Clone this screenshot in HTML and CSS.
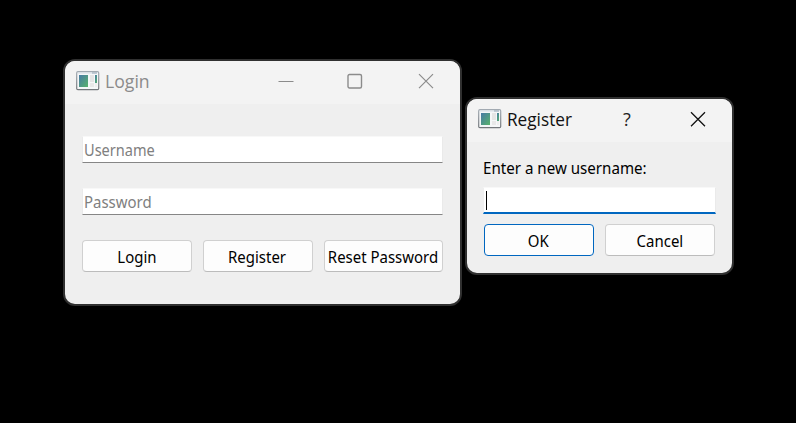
FILE: index.html
```
<!DOCTYPE html>
<html lang="en">
<head>
<meta charset="utf-8">
<title>Login</title>
<link rel="stylesheet" href="styles.css">
</head>
<body>
<svg width="0" height="0" class="defs" aria-hidden="true">
  <defs>
    <linearGradient id="pane" x1="0" y1="0" x2="1" y2="1"><stop offset="0" stop-color="#477aa5"/><stop offset="1" stop-color="#58b36c"/></linearGradient>
    <linearGradient id="frame" x1="0" y1="0" x2="0" y2="1"><stop offset="0" stop-color="#a2aab2"/><stop offset="1" stop-color="#73777b"/></linearGradient>
    <symbol id="app" viewBox="0 0 24 20">
      <rect x=".7" y=".7" width="22" height="18" rx="1.2" fill="#f5f7f8" stroke="url(#frame)" stroke-width="1.2"/>
      <path d="M2 2h14" stroke="#d5dde5"/><path d="M16 2h5" stroke="#8c9eaf"/>
      <rect x="3" y="4" width="9" height="12" fill="url(#pane)"/>
      <rect x="14" y="4" width="4" height="7" fill="#e5e5e5"/>
      <rect x="14" y="12" width="4" height="4" fill="#e8e8e8"/>
      <rect x="19" y="4" width="2" height="8" fill="url(#pane)"/>
      <rect x="19" y="12" width="2" height="4" fill="#eee"/>
    </symbol>
  </defs>
</svg>
<main class="desktop">
  <section class="window login">
    <header class="titlebar">
      <svg class="app-icon" width="24" height="20"><use href="#app"/></svg>
      <h1 class="title">Login</h1>
      <div class="controls">
        <svg width="16" height="16"><path d="M.5 8.5h15"/></svg>
        <svg width="16" height="16"><rect x="1" y="1.5" width="13.5" height="13.5" rx="1.5" stroke-width="1.4"/></svg>
        <svg width="16" height="16"><path d="M1 1.2l14 14M15 1.2l-14 14"/></svg>
      </div>
    </header>
    <div class="body">
      <div class="field"><span class="text username">Username</span></div>
      <div class="field"><span class="text">Password</span></div>
      <div class="buttons">
        <button><span class="text">Login</span></button>
        <button><span class="text">Register</span></button>
        <button class="wide"><span class="text">Reset Password</span></button>
      </div>
    </div>
  </section>
  <section class="window register">
    <header class="titlebar">
      <svg class="app-icon" width="24" height="20"><use href="#app"/></svg>
      <h1 class="title">Register</h1>
      <div class="controls">
        <span class="help">?</span>
        <svg width="16" height="16"><path d="M1 1.2l14 14M15 1.2l-14 14"/></svg>
      </div>
    </header>
    <div class="body">
      <div class="label"><span class="text">Enter a new username:</span></div>
      <div class="field focused"><span class="caret"></span></div>
      <div class="buttons">
        <button class="default"><span class="text">OK</span></button>
        <button><span class="text">Cancel</span></button>
      </div>
    </div>
  </section>
</main>
</body>
</html>
```
FILE: styles.css
```
* { box-sizing: border-box; }
body { margin: 0; background: #000; font-family: "Noto Sans", "Open Sans", sans-serif; overflow: hidden; }
.defs { position: absolute; }
.desktop { position: relative; width: 796px; height: 423px; }
.window { position: absolute; border: 2px solid #303030; border-radius: 12px; background: #efefef; overflow: hidden; }
.login { left: 63px; top: 59px; width: 399px; height: 247px; }
.register { left: 465px; top: 97px; width: 269px; height: 178px; }

.titlebar { display: flex; align-items: flex-start; height: 43px; padding: 10px 0 0 11px; background: #f3f3f3; }
.app-icon { flex: none; }
.title { margin: 0 0 0 5px; font: 400 18px/20px "Open Sans", sans-serif; color: #111; transform: scaleX(.955); transform-origin: 0 50%; }
.controls { display: flex; margin-left: auto; padding-top: 2px; stroke: #111; stroke-width: 1.3; fill: none; }
.login .title { color: #8b8b8b; transform: scaleX(.98); }
.login .controls { gap: 53px; padding-right: 26px; stroke: #8b8b8b; stroke-width: 1.2; }
.login .controls svg:last-child { margin-left: 2px; }
.register .controls { padding-right: 26px; }
.help { width: 10px; margin-right: 57px; font: 18px/17px "Open Sans", sans-serif; color: #222; }

.text { display: inline-block; font-size: 16px; line-height: 24px; white-space: nowrap; transform: scaleX(.935); }
.text.username { transform: scaleX(.91); }
.field { height: 27px; padding: 2px; background: #fff; border: 1px solid #eaeaea; border-top-color: #f8f8f8; border-bottom: 1px solid #868686; color: #808080; }
.field .text { display: block; transform-origin: 0 50%; }
.login .body { padding: 32px 17px 0; }
.login .field { margin-bottom: 25px; padding: 1px 0 0 1px; }
.buttons { display: flex; gap: 11px; }
button { display: flex; justify-content: center; align-items: center; width: 110px; height: 32px; padding: 2px 1px 0 0; border: 1px solid #d0d0d0; border-bottom-color: #bcbcbc; border-radius: 4px; background: #fdfdfd; color: #000; font-family: inherit; }
button.wide { width: 119px; }
button.default { border-color: #0067c0; }

.register .body { padding: 14px 16px 0; }
.label { height: 31px; }
.label .text { transform: scaleX(.945); transform-origin: 0 50%; }
.register .field { width: 233px; border-left: 1px solid #efefef; border-bottom: 2px solid #0067c0; }
.caret { display: block; width: 1px; height: 19px; margin-top: 1px; background: #000; }
.register .buttons { margin: 10px 0 0 1px; }
```
